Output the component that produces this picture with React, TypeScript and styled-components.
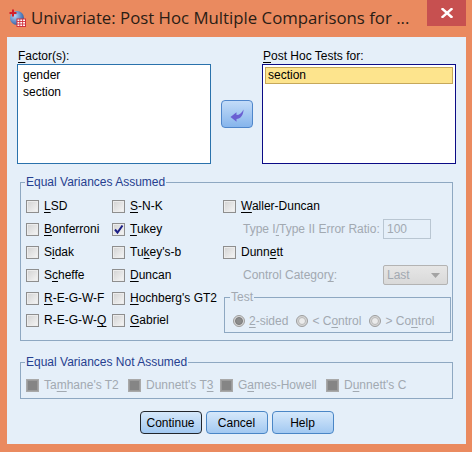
import { createGlobalStyle, styled } from "styled-components";

const GlobalStyle = createGlobalStyle`
  * {
    box-sizing: border-box;
  }
  html,
  body {
    margin: 0;
    padding: 0;
    background: #ea8a5f;
  }
  body {
    font-family: "Liberation Sans", Arial, sans-serif;
    font-size: 12px;
    color: #000;
  }
`;

const App = () => {
  return (
    <>
      <GlobalStyle />
      <Window>
        <TitleBar>
          <AppIcon />
          <Title>Univariate: Post Hoc Multiple Comparisons for ...</Title>
          <CloseButton aria-label="Close">
            <svg width="12" height="10" viewBox="0 0 12 10">
              <path d="M1.5 1 L10.5 9 M10.5 1 L1.5 9" stroke="#fff" strokeWidth="2.4" strokeLinecap="square" />
            </svg>
          </CloseButton>
        </TitleBar>

        <Body>
          <TopGrid>
            <FieldLabel $col={1}>
              <Key>F</Key>actor(s):
            </FieldLabel>
            <FieldLabel $col={3}>
              <Key>P</Key>ost Hoc Tests for:
            </FieldLabel>
            <ListBox $col={1}>
              <ListItem>gender</ListItem>
              <ListItem>section</ListItem>
            </ListBox>
            <MoveButton aria-label="Move">
              <svg width="14" height="13" viewBox="0 0 14 13">
                <path
                  d="M0.5 8 L6.5 3.3 V6 C9.5 6 12 4 13.5 0.5 C13.5 6 10.5 10 6.5 10 V12.7 Z"
                  fill="#6a5fd2"
                />
              </svg>
            </MoveButton>
            <ListBox $col={3} $focused>
              <ListItem $selected>section</ListItem>
            </ListBox>
          </TopGrid>

          <Group>
            <GroupTitle>Equal Variances Assumed</GroupTitle>
            <AssumedGrid>
              <Check>
                <Box />
                <span>
                  <Key>L</Key>SD
                </span>
              </Check>
              <Check>
                <Box />
                <span>
                  <Key>B</Key>onferroni
                </span>
              </Check>
              <Check>
                <Box />
                <span>
                  S<Key>i</Key>dak
                </span>
              </Check>
              <Check>
                <Box />
                <span>
                  S<Key>c</Key>heffe
                </span>
              </Check>
              <Check>
                <Box />
                <span>
                  <Key>R</Key>-E-G-W-F
                </span>
              </Check>
              <Check>
                <Box />
                <span>
                  R-E-G-W-<Key>Q</Key>
                </span>
              </Check>

              <Check>
                <Box />
                <span>
                  <Key>S</Key>-N-K
                </span>
              </Check>
              <Check>
                <Box>
                  <svg width="11" height="11" viewBox="0 0 11 11">
                    <path d="M2 5.5 L4.5 8.5 L9.5 1.5" stroke="#1b1f86" strokeWidth="2" fill="none" />
                  </svg>
                </Box>
                <span>
                  <Key>T</Key>ukey
                </span>
              </Check>
              <Check>
                <Box />
                <span>
                  Tu<Key>k</Key>ey's-b
                </span>
              </Check>
              <Check>
                <Box />
                <span>
                  <Key>D</Key>uncan
                </span>
              </Check>
              <Check>
                <Box />
                <span>
                  <Key>H</Key>ochberg's GT2
                </span>
              </Check>
              <Check>
                <Box />
                <span>
                  <Key>G</Key>abriel
                </span>
              </Check>

              <Check>
                <Box />
                <span>
                  <Key>W</Key>aller-Duncan
                </span>
              </Check>
              <OptionRow>
                <OptionLabel>
                  Type I<Key>/</Key>Type II Error Ratio:
                </OptionLabel>
                <RatioField>100</RatioField>
              </OptionRow>
              <Check>
                <Box />
                <span>
                  Dunn<Key>e</Key>tt
                </span>
              </Check>
              <OptionRow>
                <OptionLabel>
                  Control Categor<Key>y</Key>:
                </OptionLabel>
                <CategorySelect>
                  <span>Last</span>
                  <svg width="9" height="5" viewBox="0 0 9 5">
                    <path d="M0 0 H9 L4.5 5 Z" fill="#a3a3a3" />
                  </svg>
                </CategorySelect>
              </OptionRow>
              <TestGroup>
                <TestTitle>Test</TestTitle>
                <RadioRow>
                  <RadioOption>
                    <Radio $on />
                    <span>
                      <Key>2</Key>-sided
                    </span>
                  </RadioOption>
                  <RadioOption>
                    <Radio />
                    <span>
                      &lt; C<Key>o</Key>ntrol
                    </span>
                  </RadioOption>
                  <RadioOption>
                    <Radio />
                    <span>
                      &gt; Co<Key>n</Key>trol
                    </span>
                  </RadioOption>
                </RadioRow>
              </TestGroup>
            </AssumedGrid>
          </Group>

          <NotAssumedGroup>
            <GroupTitle>Equal Variances Not Assumed</GroupTitle>
            <NotAssumedRow>
              <Check $disabled>
                <Box $disabled />
                <span>
                  Ta<Key>m</Key>hane's T2
                </span>
              </Check>
              <Check $disabled>
                <Box $disabled />
                <span>
                  Dunnett's T<Key>3</Key>
                </span>
              </Check>
              <Check $disabled>
                <Box $disabled />
                <span>
                  G<Key>a</Key>mes-Howell
                </span>
              </Check>
              <Check $disabled>
                <Box $disabled />
                <span>
                  D<Key>u</Key>nnett's C
                </span>
              </Check>
            </NotAssumedRow>
          </NotAssumedGroup>

          <Footer>
            <DialogButton $default>Continue</DialogButton>
            <DialogButton>Cancel</DialogButton>
            <DialogButton>Help</DialogButton>
          </Footer>
        </Body>
      </Window>
    </>
  );
};

export default App;

const AppIcon = () => (
  <IconWrap>
    <svg width="17" height="18" viewBox="0 0 17 18">
      <defs>
        <radialGradient id="globe" cx="0.35" cy="0.35" r="0.75">
          <stop offset="0" stopColor="#b8d2f0" />
          <stop offset="0.6" stopColor="#5b86c4" />
          <stop offset="1" stopColor="#2c4f8c" />
        </radialGradient>
      </defs>
      <circle cx="8" cy="9" r="7" fill="url(#globe)" />
      <rect x="8" y="10" width="8.5" height="7.5" fill="#fff" stroke="#d2303c" strokeWidth="1" />
      <path d="M8 12.5 H16.5 M8 15 H16.5 M10.8 10 V17.5 M13.6 10 V17.5" stroke="#d2303c" strokeWidth="0.9" />
      <rect x="0.5" y="3" width="7" height="2" fill="#d41f2a" />
      <rect x="3" y="0.5" width="2" height="7" fill="#d41f2a" />
    </svg>
  </IconWrap>
);

const Window = styled.div`
  width: 472px;
  height: 452px;
  display: flex;
  flex-direction: column;
  padding: 0 6px 8px 7px;
  background: #ea8a5f;
`;

const TitleBar = styled.div`
  height: 37px;
  display: flex;
  align-items: flex-start;
  flex-shrink: 0;
`;

const IconWrap = styled.div`
  margin: 9px 0 0 2px;
  width: 17px;
  height: 18px;
`;

const Title = styled.div`
  margin-left: 5px;
  padding-top: 8px;
  font-family: "Open Sans", "Noto Sans", sans-serif;
  font-size: 16.8px;
  line-height: 20px;
  color: #2a1d15;
  white-space: nowrap;
`;

const CloseButton = styled.div`
  margin-left: auto;
  width: 39px;
  height: 26px;
  display: flex;
  align-items: center;
  justify-content: center;
  background: #c75050;
`;

const Body = styled.div`
  flex: 1;
  display: flex;
  flex-direction: column;
  padding: 12px 10px 0;
  background: #e5eff9;
`;

const TopGrid = styled.div`
  display: grid;
  grid-template-columns: 194px 1fr 194px;
  grid-template-rows: 15px 100px;
`;

const FieldLabel = styled.div<{ $col: number }>`
  grid-column: ${({ $col }) => $col};
  grid-row: 1;
  line-height: 14px;
  padding-left: 1px;
`;

const Key = styled.span`
  text-decoration: underline;
  text-underline-offset: 2px;
`;

const ListBox = styled.div<{ $col: number; $focused?: boolean }>`
  grid-column: ${({ $col }) => $col};
  grid-row: 2;
  display: flex;
  flex-direction: column;
  padding: 2px;
  background: #fff;
  border: 1px solid ${({ $focused }) => ($focused ? "#0b0b86" : "#2a72ac")};
`;

const ListItem = styled.div<{ $selected?: boolean }>`
  height: 17px;
  padding: 0 2px;
  line-height: 15px;
  border: 1px solid ${({ $selected }) => ($selected ? "#c6a85a" : "transparent")};
  background: ${({ $selected }) => ($selected ? "#fde48d" : "transparent")};
`;

const MoveButton = styled.div`
  grid-column: 2;
  grid-row: 2;
  align-self: center;
  justify-self: center;
  width: 32px;
  height: 28px;
  display: flex;
  align-items: center;
  justify-content: center;
  padding-top: 2px;
  border: 1px solid #4f86cb;
  border-radius: 4px;
  background: linear-gradient(#c3dcf8, #86b5ec);
`;

const Group = styled.fieldset`
  margin: 11px 3px 0;
  padding: 6px 1px 9px 5px;
  min-width: 0;
  border: 1px solid #8ea8c2;
`;

const NotAssumedGroup = styled(Group)`
  margin-top: 14px;
  padding: 5px 1px 2px 5px;
`;

const GroupTitle = styled.legend`
  margin-left: -1px;
  padding: 0 1px;
  line-height: 14px;
  color: #26408f;
`;

const AssumedGrid = styled.div`
  display: grid;
  grid-template-columns: 86px 111px 1fr;
  grid-template-rows: 22px 24px 22px 24px 22px 22px;
  grid-auto-flow: column;
`;

const Check = styled.div<{ $disabled?: boolean }>`
  display: flex;
  align-items: center;
  gap: 5px;
  line-height: 14px;
  white-space: nowrap;
  color: ${({ $disabled }) => ($disabled ? "#a2a9b1" : "#000")};
`;

const Box = styled.span<{ $disabled?: boolean }>`
  width: 13px;
  height: 13px;
  flex-shrink: 0;
  display: flex;
  align-items: center;
  justify-content: center;
  border: 1px solid ${({ $disabled }) => ($disabled ? "#a9a9a9" : "#8e8e8e")};
  background: ${({ $disabled }) =>
    $disabled ? "#858585" : "linear-gradient(135deg, #d2d2d2, #f6f6f6)"};
  box-shadow: inset 0 0 0 1px ${({ $disabled }) => ($disabled ? "#9b9b9b" : "#ececec")};
`;

const OptionRow = styled.div`
  display: flex;
  align-items: center;
  padding-left: 20px;
  color: #a2a9b1;
  white-space: nowrap;
`;

const OptionLabel = styled.span`
  width: 140px;
`;

const RatioField = styled.div`
  width: 48px;
  height: 20px;
  padding-left: 3px;
  line-height: 18px;
  border: 1px solid #b9c6d2;
`;

const CategorySelect = styled.div`
  width: 65px;
  height: 20px;
  display: flex;
  align-items: center;
  justify-content: space-between;
  padding: 0 7px 0 3px;
  border: 1px solid #b3b3b3;
  border-radius: 2px;
  background: linear-gradient(#e6e6e6, #d9d9d9);
`;

const TestGroup = styled.fieldset`
  grid-row: span 2;
  margin: 3px 0 -2px 1px;
  padding: 10px 1px 4px 7px;
  min-width: 0;
  border: 1px solid #8ea8c2;
`;

const TestTitle = styled.legend`
  margin-left: -2px;
  padding: 0 1px;
  line-height: 14px;
  color: #a2a9b1;
`;

const RadioRow = styled.div`
  display: flex;
  gap: 8px;
  margin-left: 1px;
  line-height: 14px;
  color: #a2a9b1;
`;

const RadioOption = styled.div`
  display: flex;
  align-items: center;
  gap: 4px;
  white-space: nowrap;
`;

const Radio = styled.span<{ $on?: boolean }>`
  width: 12px;
  height: 12px;
  display: flex;
  align-items: center;
  justify-content: center;
  border: 1px solid #9e9e9e;
  border-radius: 50%;
  background: #d6d6d6;

  &::after {
    content: "";
    width: 6px;
    height: 6px;
    border-radius: 50%;
    border: 1px solid ${({ $on }) => ($on ? "#7c7c7c" : "#b9b9b9")};
    background: ${({ $on }) => ($on ? "#8c8c8c" : "#ebebeb")};
  }
`;

const NotAssumedRow = styled.div`
  display: grid;
  grid-template-columns: 102px 92px 106px 1fr;
  height: 22px;
`;

const Footer = styled.div`
  display: flex;
  justify-content: center;
  gap: 4px;
  margin-top: 12px;
`;

const DialogButton = styled.button<{ $default?: boolean }>`
  width: 62px;
  height: 23px;
  padding: 0;
  font-family: "Liberation Sans", Arial, sans-serif;
  font-size: 12px;
  color: #000;
  border: 1px solid ${({ $default }) => ($default ? "#22262c" : "#4a86c6")};
  border-radius: 4px;
  background: linear-gradient(#d6e8fb, #a2c9f1);
`;
